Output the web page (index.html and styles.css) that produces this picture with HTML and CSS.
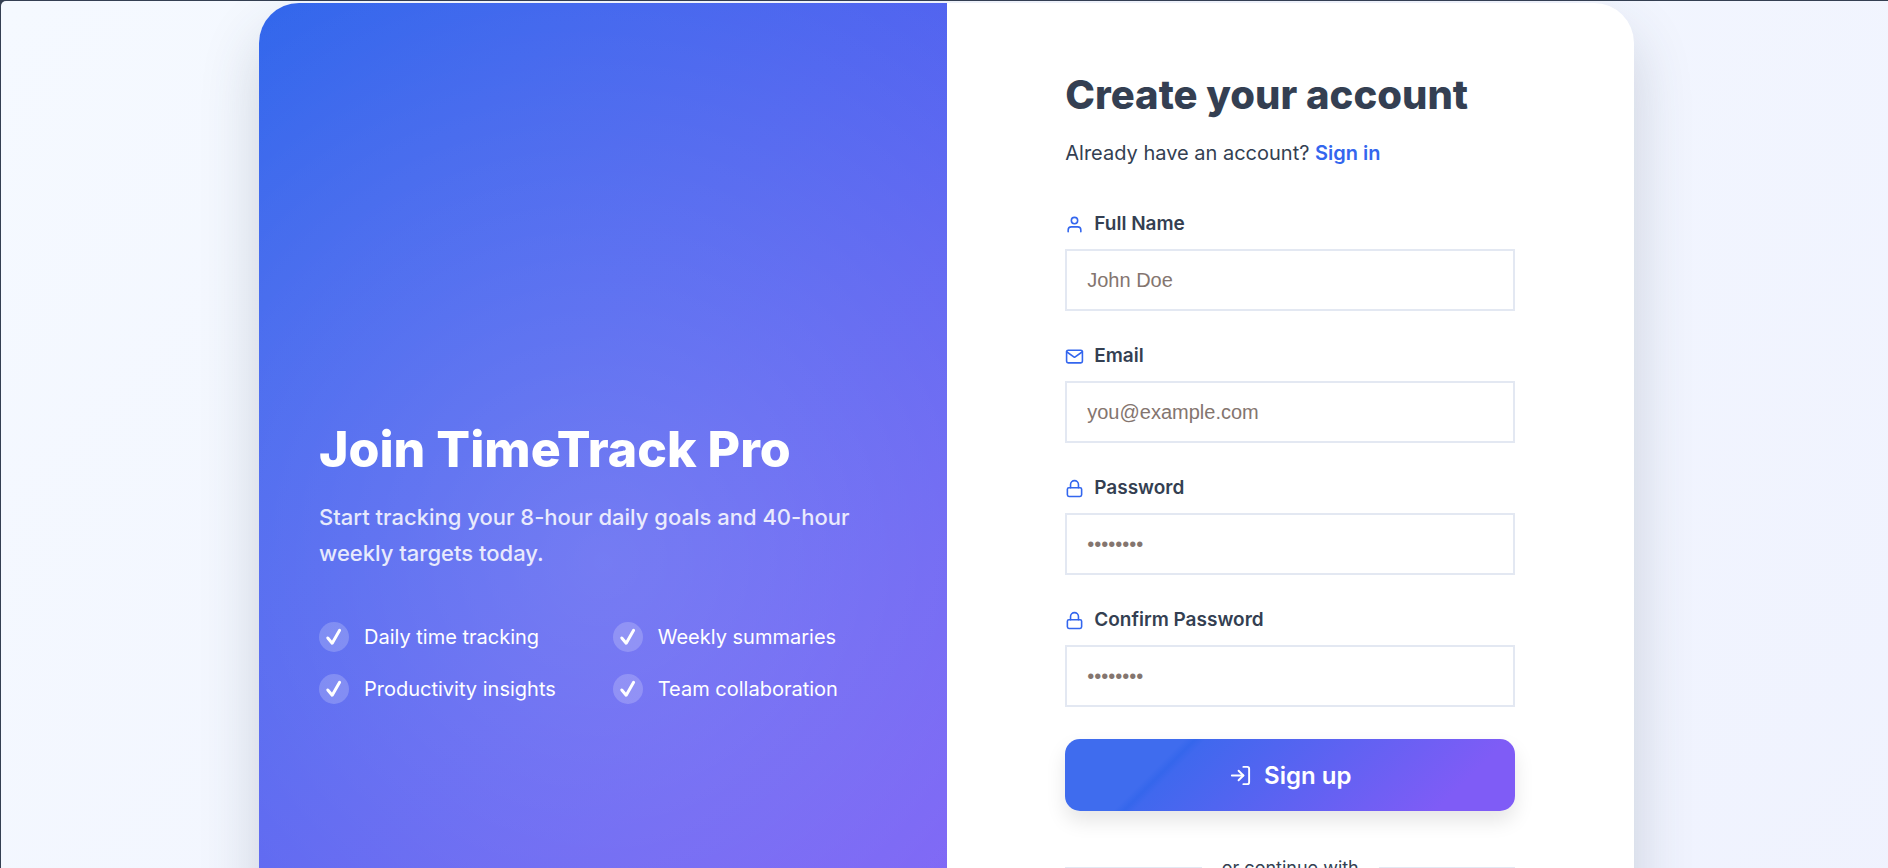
FILE: index.html
```html
<!DOCTYPE html>
<html lang="en">
<head>
  <meta charset="UTF-8" />
  <meta name="viewport" content="width=device-width, initial-scale=1.0" />
  <title>Sign up - TimeTrack Pro</title>
  <link rel="stylesheet" href="styles.css">
</head>
<body>
  <main class="page">
    <div class="auth-card">
      <section class="hero">
        <div class="hero-content">
          <h1>Join TimeTrack Pro</h1>
          <p>Start tracking your 8-hour daily goals and 40-hour weekly targets today.</p>
          <ul class="features">
            <li><span class="check"><svg viewBox="0 0 30 30"><path d="M8.8 16l4.4 5.2L20.6 8.2" /></svg></span>Daily time tracking</li>
            <li><span class="check"><svg viewBox="0 0 30 30"><path d="M8.8 16l4.4 5.2L20.6 8.2" /></svg></span>Weekly summaries</li>
            <li><span class="check"><svg viewBox="0 0 30 30"><path d="M8.8 16l4.4 5.2L20.6 8.2" /></svg></span>Productivity insights</li>
            <li><span class="check"><svg viewBox="0 0 30 30"><path d="M8.8 16l4.4 5.2L20.6 8.2" /></svg></span>Team collaboration</li>
          </ul>
        </div>
      </section>

      <section class="form-side">
        <div class="form-wrap">
          <h2>Create your account</h2>
          <p class="subtitle">Already have an account? <a href="#signin">Sign in</a></p>

          <form id="signupForm">
            <div class="form-group">
              <label for="name">
                <svg class="icon" viewBox="0 0 24 24"><path d="M20 21v-2a4 4 0 0 0-4-4H8a4 4 0 0 0-4 4v2" /><circle cx="12" cy="7" r="4" /></svg>
                Full Name
              </label>
              <input type="text" id="name" placeholder="John Doe" required />
            </div>

            <div class="form-group">
              <label for="email">
                <svg class="icon" viewBox="0 0 24 24"><path d="M4 4h16c1.1 0 2 .9 2 2v12c0 1.1-.9 2-2 2H4c-1.1 0-2-.9-2-2V6c0-1.1.9-2 2-2z" /><path d="M22 6l-10 7L2 6" /></svg>
                Email
              </label>
              <input type="email" id="email" placeholder="you@example.com" required />
            </div>

            <div class="form-group">
              <label for="password">
                <svg class="icon" viewBox="0 0 24 24"><rect x="3" y="11" width="18" height="11" rx="2" /><path d="M7 11V7a5 5 0 0 1 10 0v4" /></svg>
                Password
              </label>
              <input type="password" id="password" placeholder="••••••••" required />
            </div>

            <div class="form-group">
              <label for="confirm">
                <svg class="icon" viewBox="0 0 24 24"><rect x="3" y="11" width="18" height="11" rx="2" /><path d="M7 11V7a5 5 0 0 1 10 0v4" /></svg>
                Confirm Password
              </label>
              <input type="password" id="confirm" placeholder="••••••••" required />
            </div>

            <button type="submit" class="btn-signup">
              <svg class="icon" viewBox="0 0 24 24"><path d="M15 3h4a2 2 0 0 1 2 2v14a2 2 0 0 1-2 2h-4" /><path d="M10 17l5-5-5-5" /><path d="M15 12H3" /></svg>
              Sign up
            </button>
          </form>

          <div class="divider"><span>or continue with</span></div>
        </div>
      </section>
    </div>
  </main>
</body>
</html>
```

FILE: styles.css
```css
* {
  box-sizing: border-box;
  margin: 0;
  padding: 0;
}
body {
  height: 100vh;
  overflow: hidden;
  padding: 1px 0 0 1px;
  background: #343f52;
  color: #343f52;
  font-family: Inter, sans-serif;
  font-size: 18px;
}
.page {
  display: flex;
  justify-content: center;
  padding: 2px 0 0 4px;
  border-top-left-radius: 5px;
  background: linear-gradient(135deg, #f5f9ff 0%, #eff2fe 100%);
}
.auth-card {
  display: grid;
  grid-template-columns: 1fr 1fr;
  width: 100%;
  max-width: 1375px;
  min-height: 1118px;
  border-radius: 40px;
  overflow: hidden;
  background: #fff;
  box-shadow: 0 30px 60px rgba(52, 63, 82, 0.2);
}

/* left side */
.hero {
  display: flex;
  align-items: center;
  padding: 60px;
  color: #fff;
  background:
    radial-gradient(circle, rgba(255, 255, 255, 0.18) 0%, rgba(255, 255, 255, 0) 120%),
    linear-gradient(135deg, #2b62eb 0%, #825cf6 100%);
}
.hero h1 {
  margin-bottom: 20px;
  font-size: 50px;
  font-weight: 800;
  line-height: 60px;
}
.hero p {
  margin-bottom: 50px;
  font-size: 22px;
  font-weight: 500;
  line-height: 36px;
  opacity: 0.85;
}
.features {
  display: grid;
  grid-template-columns: 1fr 1fr;
  gap: 20px;
  list-style: none;
}
.features li {
  display: flex;
  align-items: center;
  gap: 15px;
  font-size: 20px;
  line-height: 32px;
}
.check {
  width: 30px;
  height: 30px;
  border-radius: 50%;
  background: rgba(255, 255, 255, 0.2);
}
.check svg {
  display: block;
  fill: none;
  stroke: #fff;
  stroke-width: 3;
  stroke-linecap: round;
  stroke-linejoin: round;
}

/* right side */
.form-side {
  padding: 60px;
}
.form-wrap {
  max-width: 450px;
  margin: 0 auto;
}
h2 {
  margin-bottom: 10px;
  font-size: 40px;
  font-weight: 800;
  line-height: 64px;
}
.subtitle {
  margin-bottom: 40px;
  font-size: 20px;
  line-height: 32px;
}
.subtitle a {
  color: #3366ee;
  font-weight: 600;
  text-decoration: none;
}
.form-group {
  margin-bottom: 30px;
}
label {
  display: flex;
  align-items: center;
  gap: 10px;
  margin-bottom: 10px;
  font-size: 19px;
  font-weight: 600;
  line-height: 30px;
}
.icon {
  width: 19px;
  height: 19px;
  fill: none;
  stroke: currentColor;
  stroke-width: 2;
  stroke-linecap: round;
  stroke-linejoin: round;
}
label .icon {
  color: #3366ee;
}
input {
  width: 100%;
  height: 62px;
  padding: 0 20px;
  border: 2px solid #e3e8f2;
  background: #fff;
  font-family: "Liberation Sans", Arial, sans-serif;
  font-size: 20px;
}
input::placeholder {
  color: #84756f;
}
.btn-signup {
  display: flex;
  align-items: center;
  justify-content: center;
  gap: 12px;
  width: 100%;
  height: 72px;
  margin-top: 32px;
  border: 0;
  border-radius: 15px;
  color: #fff;
  background: linear-gradient(135deg, #3f6cee 23%, #3566ec 25%, #4068ee 27%, #7f5cf6 85%);
  box-shadow: 0 10px 20px rgba(0, 0, 0, 0.1);
  font-family: inherit;
  font-size: 24px;
  font-weight: 600;
  cursor: pointer;
}
.btn-signup .icon {
  width: 23px;
  height: 23px;
}
.divider {
  display: flex;
  align-items: center;
  gap: 20px;
  margin-top: 42px;
  line-height: 30px;
}
.divider::before,
.divider::after {
  content: "";
  flex: 1;
  height: 2px;
  background: #e3e8f2;
}
```
